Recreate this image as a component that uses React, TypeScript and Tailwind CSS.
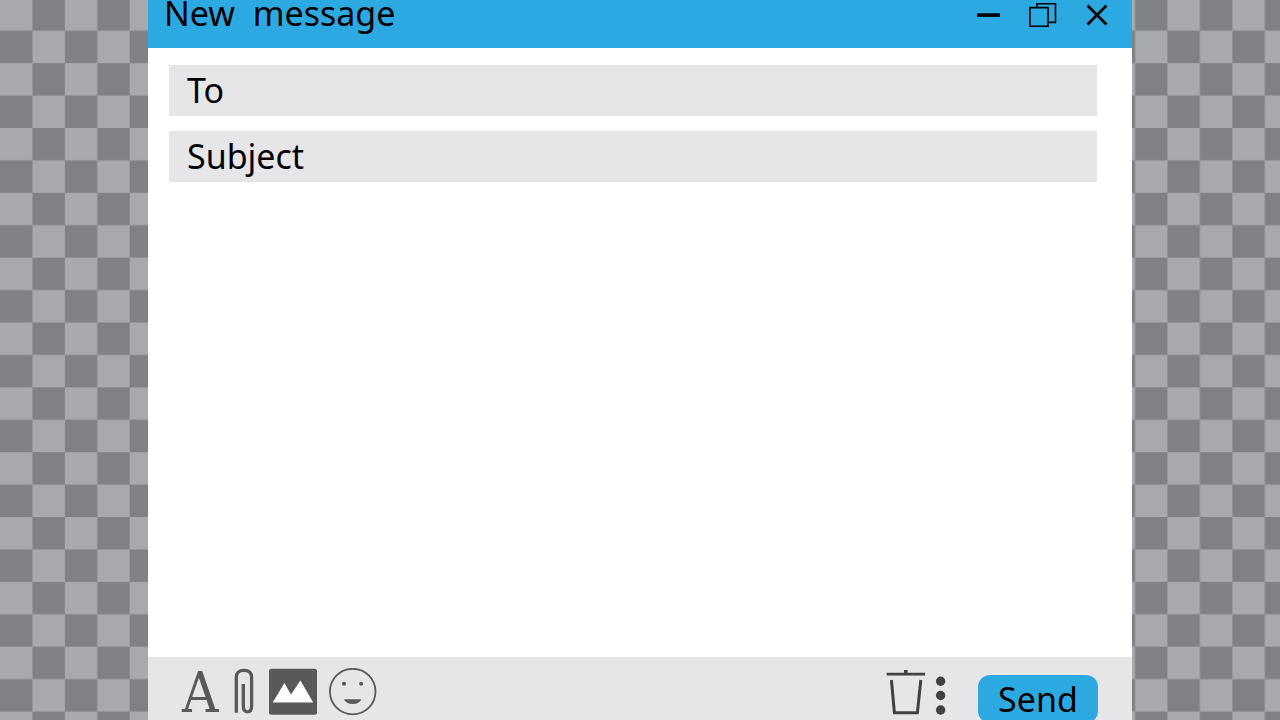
import type { ReactNode } from "react";

function Checkerboard() {
  return (
    <svg className="absolute inset-0 -z-10 h-full w-full" aria-hidden="true">
      <defs>
        <pattern
          id="checks"
          width="64.86"
          height="64.84"
          y="-1.7"
          patternUnits="userSpaceOnUse"
        >
          <rect width="65" height="65" fill="#a8a9ad" />
          <rect x="32.43" width="32.43" height="32.42" fill="#808184" />
          <rect y="32.42" width="32.43" height="32.42" fill="#808184" />
        </pattern>
      </defs>
      <rect width="100%" height="100%" fill="url(#checks)" />
    </svg>
  );
}

function IconButton({ label, children }: { label: string; children: ReactNode }) {
  return (
    <button type="button" aria-label={label} className="block shrink-0">
      {children}
    </button>
  );
}

function TitleBar() {
  return (
    <header className="flex h-12 shrink-0 items-center justify-between bg-[#2da9e2] pr-[23px] pb-[22px] pl-4">
      <h1 className="text-[34px] leading-9 whitespace-pre">New  message</h1>
      <div className="flex items-center gap-7">
        <IconButton label="Minimize">
          <svg width="24" height="28" viewBox="0 -1 24 28">
            <path d="M0 15.1H23" stroke="#000" strokeWidth="3.6" />
          </svg>
        </IconButton>
        <IconButton label="Restore">
          <svg width="28" height="28" viewBox="0 -1 28 28" fill="none" stroke="#000" strokeWidth="1.6">
            <path d="M0.9 7.6H19.1V26.2H0.9Z" />
            <path d="M8 7.6V3.8H26.5V22.4H19.1" />
          </svg>
        </IconButton>
        <IconButton label="Close">
          <svg width="24" height="28" viewBox="0 -1 24 28">
            <path d="M2.5 5.5L21.5 24.5M21.5 5.5L2.5 24.5" stroke="#000" strokeWidth="2.8" />
          </svg>
        </IconButton>
      </div>
    </header>
  );
}

function Field({ id, label }: { id: string; label: string }) {
  return (
    <div className="flex h-[51px] items-center gap-3 bg-[#e6e6e8] px-[18px] pb-0.5">
      <label htmlFor={id} className="text-[34px] leading-9">
        {label}
      </label>
      <input id={id} type="text" className="min-w-0 flex-1 bg-transparent text-2xl outline-none" />
    </div>
  );
}

function Toolbar() {
  return (
    <footer className="flex h-[63px] shrink-0 items-start justify-between bg-[#e6e6e8] px-[34px] pt-[11px]">
      <div className="flex items-start gap-3">
        <button
          type="button"
          aria-label="Text format"
          className="h-12 font-['DejaVu_Serif_Condensed','DejaVu_Serif',serif] text-[56px] leading-[50px] text-[#58595b]"
        >
          A
        </button>
        <IconButton label="Attach file">
          <svg width="27" height="48" viewBox="-4 0 27 48" fill="none" stroke="#58595b" strokeWidth="3.3">
            <path d="M2.3 44.8V9.5C2.3 4.6 5 2.4 10 2.4S17.6 4.6 17.6 9.5V38C17.6 42 16.4 43.8 13.4 43.8S9.3 42 9.3 38V16" />
          </svg>
        </IconButton>
        <IconButton label="Insert image">
          <svg width="48" height="48" viewBox="0 0 48 48">
            <rect y="0.7" width="48" height="46" rx="2.5" fill="#58595b" />
            <path d="M3.7 34.6L15.4 15L22 26.5L31.4 12.5L44.2 34.6Z" fill="#fff" />
          </svg>
        </IconButton>
        <IconButton label="Insert emoji">
          <svg width="48" height="48" viewBox="0 0 48 48">
            <circle cx="23.7" cy="23.6" r="22.8" fill="none" stroke="#58595b" strokeWidth="1.8" />
            <circle cx="15" cy="15.8" r="2" fill="#58595b" />
            <circle cx="32.1" cy="15.8" r="2" fill="#58595b" />
            <path d="M15 31.2H32.4Q30.4 36 23.7 36Q17 36 15 31.2Z" fill="#58595b" />
          </svg>
        </IconButton>
      </div>
      <div className="flex items-start">
        <IconButton label="Discard draft">
          <svg width="40" height="48" viewBox="0 0 40 48" fill="none" stroke="#414142">
            <path d="M0.6 6.1H39" strokeWidth="2.8" />
            <path d="M19.8 6V2" strokeWidth="3.6" />
            <path d="M5.4 12L8.4 44.8H31.4L34.8 12" strokeWidth="3" />
          </svg>
        </IconButton>
        <IconButton label="More options">
          <svg width="28" height="48" viewBox="0 0 28 48" fill="#414142">
            <circle cx="14.6" cy="13.2" r="4.7" />
            <circle cx="14.6" cy="27.5" r="4.7" />
            <circle cx="14.6" cy="42" r="4.7" />
          </svg>
        </IconButton>
        <button
          type="button"
          className="mt-[7px] ml-6 h-12 w-[120px] rounded-xl bg-[#2da9e2] text-[34px] leading-9"
        >
          Send
        </button>
      </div>
    </footer>
  );
}

export default function App() {
  return (
    <main className="relative isolate flex h-screen flex-col overflow-hidden px-[148px] font-['Noto_Sans',sans-serif] text-black">
      <Checkerboard />
      <TitleBar />
      <form className="flex min-h-0 flex-1 flex-col gap-[15px] bg-white pt-[17px] pr-[35px] pl-[21px]">
        <Field id="to" label="To" />
        <Field id="subject" label="Subject" />
        <textarea aria-label="Message" className="flex-1 resize-none text-2xl outline-none" />
      </form>
      <Toolbar />
    </main>
  );
}
